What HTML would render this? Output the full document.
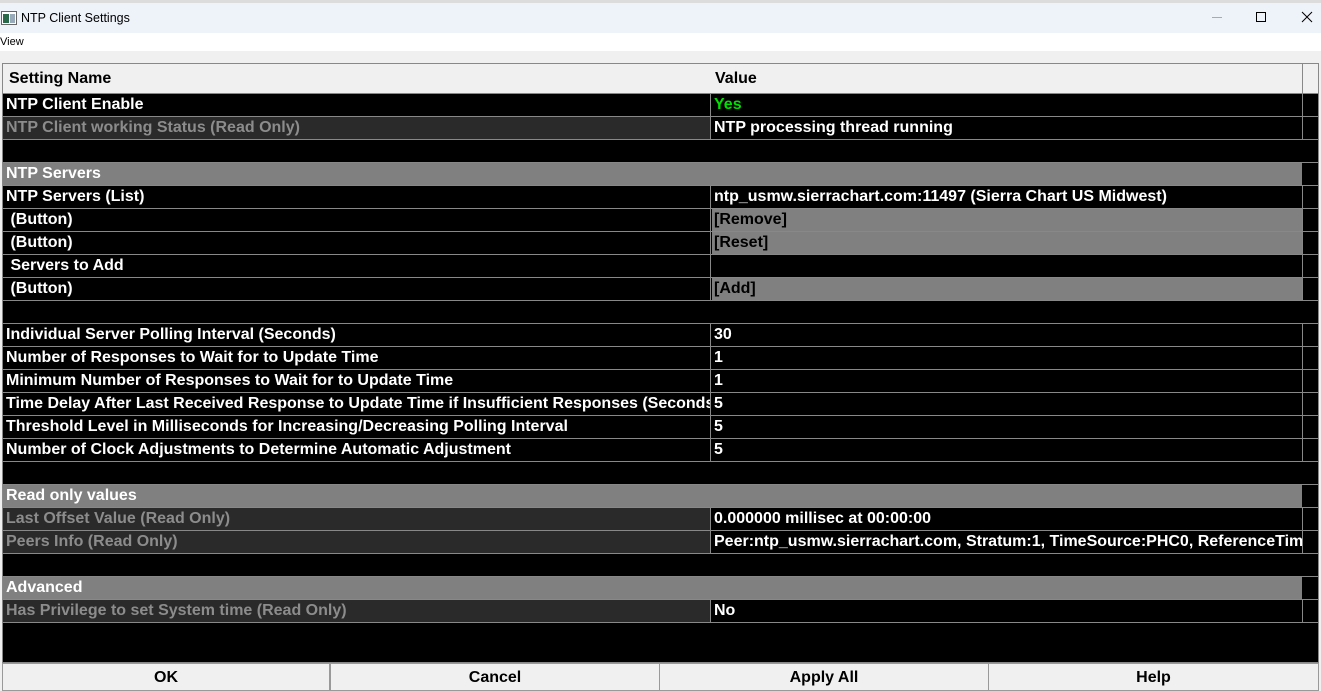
<!DOCTYPE html>
<html><head><meta charset="utf-8"><style>
*{margin:0;padding:0;box-sizing:border-box}
body{width:1321px;height:691px;overflow:hidden;background:#f0f0f0;font-family:"Liberation Sans",Arial,sans-serif;position:relative}
.top{position:absolute;left:0;top:0;width:1321px;height:3px;background:#dcdcdc}
.title{position:absolute;left:0;top:3px;width:1321px;height:30px;background:#eef2f9;font-size:12.5px;color:#000}
.title .t{position:absolute;left:21px;top:8px}
.menu{position:absolute;left:0;top:33px;width:1321px;height:18px;background:#fff;font-size:11px}
.grid{position:absolute;left:2px;top:63px;width:1317px;height:600px;background:#000;border:1px solid #888}
.hdr{position:absolute;left:0;top:0;width:1315px;height:30px;background:#f0f0f0;border-bottom:1px solid #888;font-weight:bold;font-size:16px}
.hdr span{position:absolute;top:6px}
.row{position:absolute;left:0;width:1315px;height:23px;border-bottom:1px solid #888;font-weight:bold;font-size:16px;color:#fff}
.row .n{position:absolute;left:0;top:0;width:708px;height:22px;padding:2px 0 0 3px;white-space:nowrap;overflow:hidden;border-right:1px solid #888}
.row .v{position:absolute;left:709px;top:0;width:591px;height:22px;padding:2px 0 0 2px;white-space:nowrap;overflow:hidden;border-right:1px solid #888}
.row.sec{background:#808080}
.row.sec .n{border-right:none}
.row.sec .v{border-right:none}
.row.sec:after{content:"";position:absolute;left:1299px;top:0;width:16px;height:22px;background:#000}
.row.blank .n,.row.blank .v{border-right:none}
.ro .n{background:#2a2a2a;color:#8c8c8c}
.btn .v{background:#808080;color:#000}
.buttons{position:absolute;left:2px;top:663px;width:1317px;height:28px}
.buttons div{position:absolute;top:0;height:28px;background:#f0f0f0;border:1px solid #999;font-weight:bold;font-size:16px;text-align:center;padding-top:5px}
</style></head><body>
<div class="top"></div>
<div class="title">
<svg style="position:absolute;left:1px;top:8px" width="16" height="14"><rect x="0.5" y="0.5" width="15" height="13" fill="#fff" stroke="#666"/><rect x="2" y="3" width="6" height="9" fill="#2a6a4a"/><rect x="9" y="3" width="5" height="9" fill="#9ab"/></svg>
<span class="t">NTP Client Settings</span>
<div style="position:absolute;left:1212px;top:14px;width:10px;height:1px;background:#aaa"></div>
<div style="position:absolute;left:1256px;top:9px;width:10px;height:10px;border:1px solid #000"></div>
<svg style="position:absolute;left:1301px;top:8px" width="12" height="12"><path d="M1 1L11 11M11 1L1 11" stroke="#000" stroke-width="1"/></svg>
</div>
<div class="menu"><span style="position:absolute;left:0;top:3px">View</span></div>
<div class="grid">
<div class="hdr"><span style="left:6px">Setting Name</span><span style="left:712px">Value</span><div style="position:absolute;left:1299px;top:0;width:1px;height:30px;background:#888"></div></div>

<div class="row" style="top:30px"><div class="n">NTP Client Enable</div><div class="v" style="color:#00e000">Yes</div></div>
<div class="row ro" style="top:53px"><div class="n">NTP Client working Status (Read Only)</div><div class="v">NTP processing thread running</div></div>
<div class="row blank" style="top:76px"></div>
<div class="row sec" style="top:99px"><div class="n">NTP Servers</div></div>
<div class="row" style="top:122px"><div class="n">NTP Servers (List)</div><div class="v">ntp_usmw.sierrachart.com:11497 (Sierra Chart US Midwest)</div></div>
<div class="row btn" style="top:145px"><div class="n">&nbsp;(Button)</div><div class="v">[Remove]</div></div>
<div class="row btn" style="top:168px"><div class="n">&nbsp;(Button)</div><div class="v">[Reset]</div></div>
<div class="row" style="top:191px"><div class="n">&nbsp;Servers to Add</div><div class="v"></div></div>
<div class="row btn" style="top:214px"><div class="n">&nbsp;(Button)</div><div class="v">[Add]</div></div>
<div class="row blank" style="top:237px"></div>
<div class="row" style="top:260px"><div class="n">Individual Server Polling Interval (Seconds)</div><div class="v">30</div></div>
<div class="row" style="top:283px"><div class="n">Number of Responses to Wait for to Update Time</div><div class="v">1</div></div>
<div class="row" style="top:306px"><div class="n">Minimum Number of Responses to Wait for to Update Time</div><div class="v">1</div></div>
<div class="row" style="top:329px"><div class="n">Time Delay After Last Received Response to Update Time if Insufficient Responses (Seconds)</div><div class="v">5</div></div>
<div class="row" style="top:352px"><div class="n">Threshold Level in Milliseconds for Increasing/Decreasing Polling Interval</div><div class="v">5</div></div>
<div class="row" style="top:375px"><div class="n">Number of Clock Adjustments to Determine Automatic Adjustment</div><div class="v">5</div></div>
<div class="row blank" style="top:398px"></div>
<div class="row sec" style="top:421px"><div class="n">Read only values</div></div>
<div class="row ro" style="top:444px"><div class="n">Last Offset Value (Read Only)</div><div class="v">0.000000 millisec at 00:00:00</div></div>
<div class="row ro" style="top:467px"><div class="n">Peers Info (Read Only)</div><div class="v">Peer:ntp_usmw.sierrachart.com, Stratum:1, TimeSource:PHC0, ReferenceTime</div></div>
<div class="row blank" style="top:490px"></div>
<div class="row sec" style="top:513px"><div class="n">Advanced</div></div>
<div class="row ro" style="top:536px"><div class="n">Has Privilege to set System time (Read Only)</div><div class="v">No</div></div>
</div>
<div class="buttons">
<div style="left:0;width:328px">OK</div>
<div style="left:328px;width:330px">Cancel</div>
<div style="left:657px;width:330px">Apply All</div>
<div style="left:986px;width:331px">Help</div>
</div>
</body></html>
